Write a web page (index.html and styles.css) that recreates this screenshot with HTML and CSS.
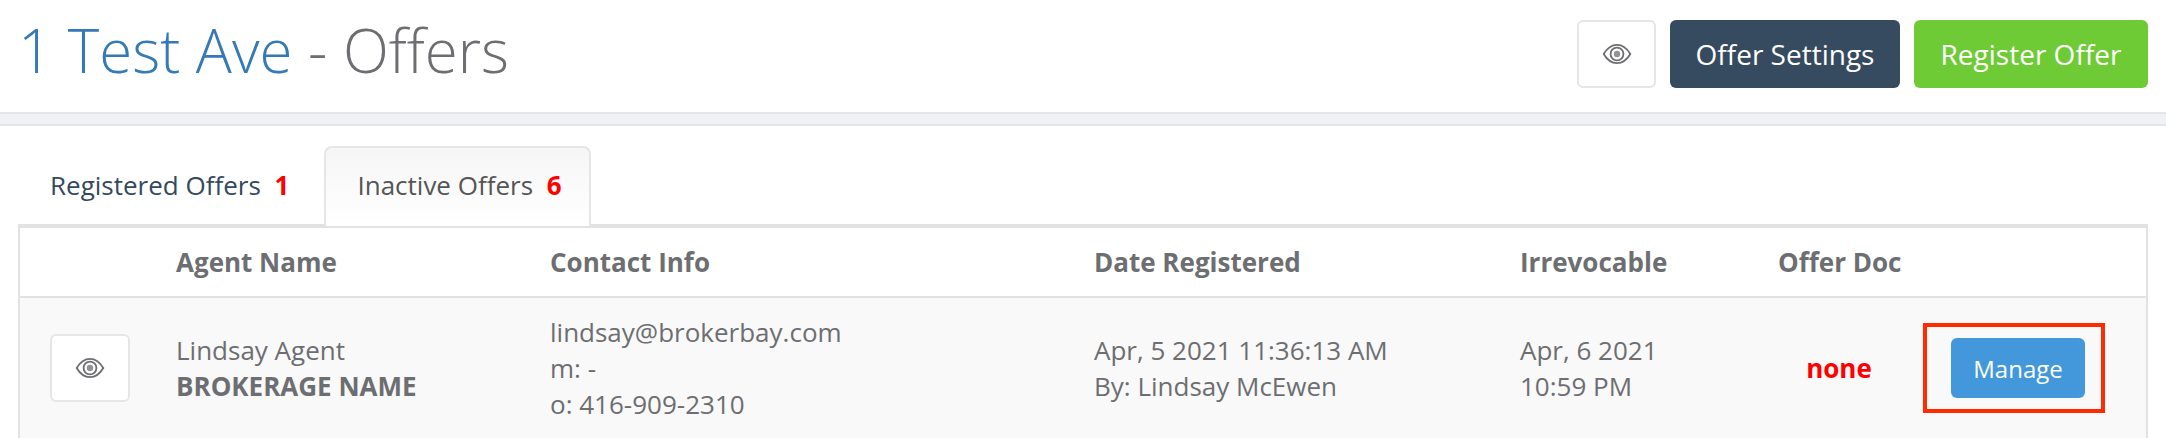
FILE: index.html
```html
<!DOCTYPE html>
<html>
<head>
	<title>1 Test Ave - Offers</title>
	<link rel="stylesheet" href="styles.css">
</head>
<body>
	<svg class="icon-defs" width="0" height="0">
		<symbol id="eye" viewBox="0 0 32 24">
			<path d="M1.5 12C5 6 10 2 16 2S27 6 30.500 12C27 18 22 22 16 22S5 18 1.500 12Z" fill="none" stroke="currentColor" stroke-width="2"/>
			<circle cx="16" cy="12" r="7" fill="none" stroke="currentColor" stroke-width="2"/>
			<circle cx="16" cy="12" r="3.500" fill="currentColor" opacity="0.75"/>
		</symbol>
	</svg>

	<div class="page-header">
		<h1 class="page-title"><a href="#">1 Test Ave</a> - Offers</h1>
		<div class="header-actions">
			<button class="btn btn-icon btn-icon-top"><svg class="eye"><use href="#eye"/></svg></button>
			<button class="btn btn-dark">Offer Settings</button>
			<button class="btn btn-green">Register Offer</button>
		</div>
	</div>
	<div class="header-band"></div>

	<div class="content">
		<ul class="tabs">
			<li class="tab">Registered Offers <span class="count">1</span></li>
			<li class="tab tab-active">Inactive Offers <span class="count">6</span></li>
		</ul>

		<table class="offers">
			<colgroup>
				<col class="col-view">
				<col class="col-agent">
				<col class="col-contact">
				<col class="col-date">
				<col class="col-irrevocable">
				<col class="col-doc">
				<col class="col-action">
			</colgroup>
			<thead>
				<tr>
					<th></th>
					<th>Agent Name</th>
					<th>Contact Info</th>
					<th>Date Registered</th>
					<th>Irrevocable</th>
					<th>Offer Doc</th>
					<th></th>
				</tr>
			</thead>
			<tbody>
				<tr>
					<td class="cell-view"><button class="btn btn-icon btn-icon-row"><svg class="eye"><use href="#eye"/></svg></button></td>
					<td>Lindsay Agent<br><b>BROKERAGE NAME</b></td>
					<td>lindsay@brokerbay.com<br>m: -<br>o: 416-909-2310</td>
					<td>Apr, 5 2021 11:36:13 AM<br>By: Lindsay McEwen</td>
					<td>Apr, 6 2021<br>10:59 PM</td>
					<td class="cell-doc">none</td>
					<td class="cell-action">
						<div class="callout"><button class="btn btn-blue">Manage</button></div>
					</td>
				</tr>
			</tbody>
		</table>
	</div>
</body>
</html>
```

FILE: styles.css
```css
html, body {
	margin: 0;
	height: 438px;
	overflow: hidden;
	background: #fff;
	font-family: "Open Sans", "Liberation Sans", sans-serif;
	color: #6d6e71;
}

.icon-defs {
	display: block;
}

.page-header {
	display: flex;
	justify-content: space-between;
	align-items: flex-start;
	height: 92px;
	padding: 20px 18px 0 18px;
}

.page-title {
	margin: 0;
	font-size: 60px;
	font-weight: 300;
	line-height: 60px;
	color: #6d6e71;
}

.page-title a {
	color: #337ab7;
	text-decoration: none;
}

.header-actions {
	display: flex;
	gap: 14px;
}

.header-band {
	height: 10px;
	background: #eff1f5;
	border-top: 2px solid #e3e5e9;
	border-bottom: 2px solid #e3e5e9;
}

.btn {
	border: none;
	border-radius: 6px;
	font-family: inherit;
	font-size: 28px;
	color: #fff;
	padding: 0;
}

.btn-icon {
	background: #fff;
	border: 2px solid #e6e6e6;
	color: #6d6e71;
	display: flex;
	align-items: center;
	justify-content: center;
}

.btn-icon-top {
	width: 79px;
	height: 68px;
}

.btn-icon-row {
	width: 80px;
	height: 68px;
}

.eye {
	width: 30px;
	height: 22px;
}

.btn-dark {
	width: 230px;
	height: 68px;
	background: #364a60;
}

.btn-green {
	width: 234px;
	height: 68px;
	background: #6ecb35;
}

.btn-blue {
	display: block;
	width: 134px;
	height: 60px;
	background: #4298db;
	font-size: 24px;
}

.content {
	padding: 20px 18px 0;
}

.tabs {
	display: flex;
	list-style: none;
	margin: 0;
	padding: 0 0 0 2px;
	height: 78px;
}

.tab {
	padding: 22px 30px 0;
	font-size: 26px;
	line-height: 34px;
	color: #34495e;
	box-sizing: border-box;
	height: 80px;
}

.tab-active {
	margin-left: 5px;
	padding: 20px 27px 0 31px;
	color: #555;
	background: linear-gradient(#f6f6f6, #fff);
	border: 2px solid #e6e6e6;
	border-bottom: none;
	border-radius: 8px 8px 0 0;
	position: relative;
	z-index: 1;
}

.count {
	margin-left: 7px;
	color: #f00;
	font-weight: 700;
}

.offers {
	width: 2130px;
	table-layout: fixed;
	border-collapse: separate;
	border-spacing: 0;
	border: 2px solid #e2e2e2;
	border-top-width: 4px;
	font-size: 26px;
	line-height: 36px;
}

.col-view { width: 144px; }
.col-agent { width: 374px; }
.col-contact { width: 544px; }
.col-date { width: 426px; }
.col-irrevocable { width: 258px; }
.col-doc { width: 146px; }

.offers th {
	height: 68px;
	padding: 0 12px;
	text-align: left;
	white-space: nowrap;
	font-weight: 700;
	border-bottom: 2px solid #e2e2e2;
}

.offers td {
	padding: 16px 12px;
	background: #f9f9f9;
	vertical-align: middle;
}

.offers td.cell-view {
	padding-left: 30px;
}

.offers td.cell-doc {
	text-align: center;
	color: #f00;
	font-weight: 700;
}

.offers td.cell-action {
	padding: 0 0 0 11px;
}

.callout {
	width: 182px;
	box-sizing: border-box;
	border: 4px solid #ff2a00;
	padding: 11px 16px 11px 24px;
}
```
